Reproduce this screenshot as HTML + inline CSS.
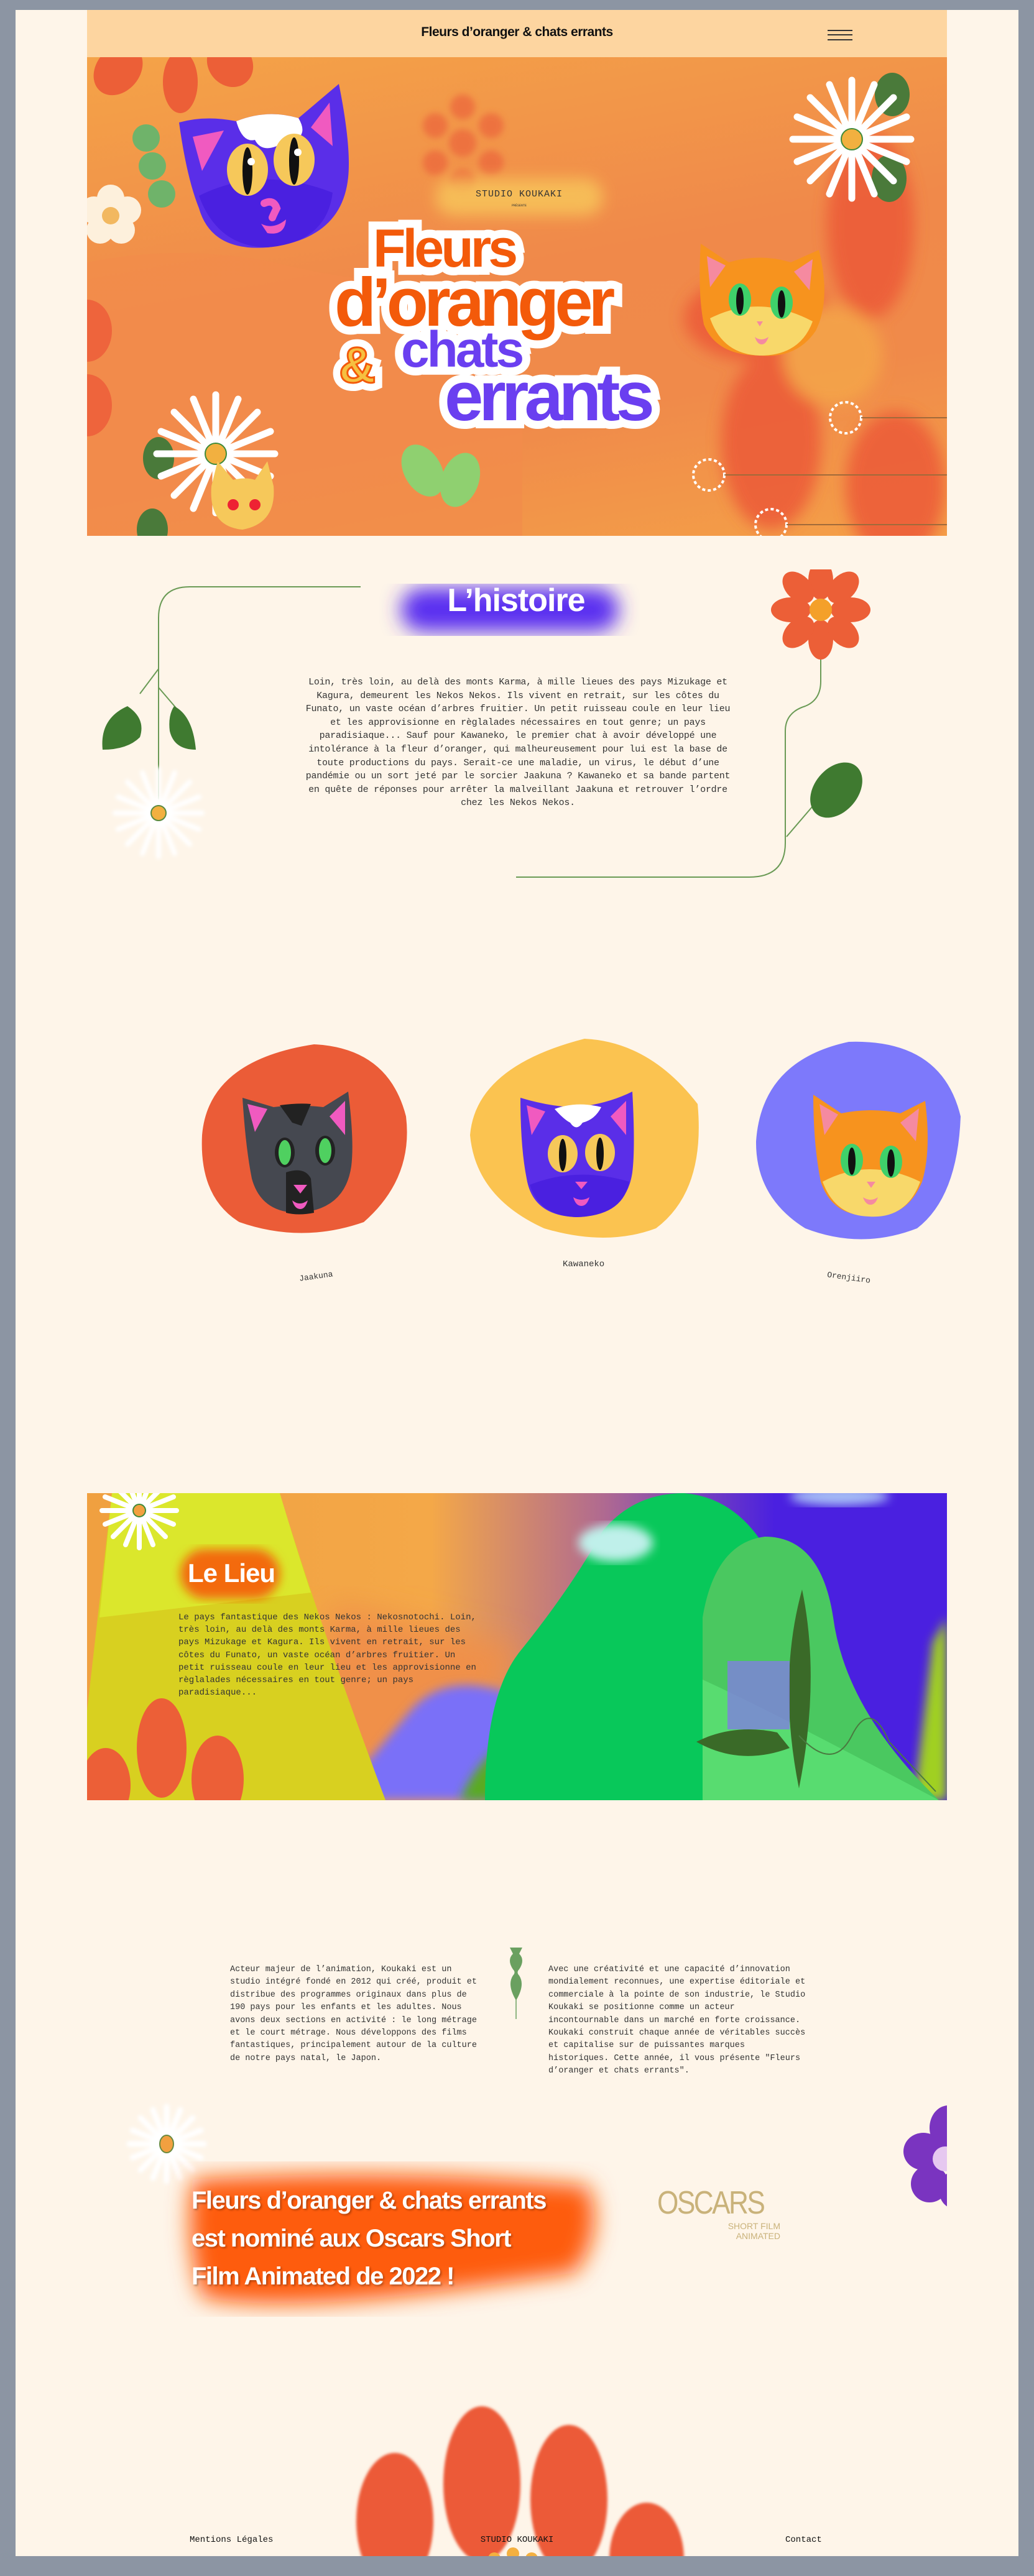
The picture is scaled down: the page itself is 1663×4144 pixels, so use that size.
<!DOCTYPE html>
<html><head><meta charset="utf-8">
<style>
*{margin:0;padding:0;box-sizing:border-box}
body{width:1663px;height:4144px;background:#8c95a3;position:relative;overflow:hidden;font-family:"Liberation Sans",sans-serif}
.panel{position:absolute;left:25px;top:16px;width:1613px;height:4096px;background:#fef5e9;overflow:hidden}
.abs{position:absolute}
.mono{font-family:"Liberation Mono",monospace;color:#333}
.t{position:absolute;font-weight:bold;line-height:1;white-space:nowrap}
.bg{-webkit-text-stroke:26px #fff;color:#fff}
</style></head><body>
<div class="panel">
<!-- header -->
<div class="abs" style="left:115px;top:0;width:1383px;height:76px;background:#fdd5a0"></div>
<div class="abs" style="left:115px;top:24px;width:1383px;text-align:center;font-weight:bold;font-size:21px;color:#111;letter-spacing:-0.5px">Fleurs d’oranger &amp; chats errants</div>
<div class="abs" style="left:1306px;top:32px;width:40px;height:2px;background:#333"></div>
<div class="abs" style="left:1306px;top:39px;width:40px;height:2px;background:#333"></div>
<div class="abs" style="left:1306px;top:47px;width:40px;height:2px;background:#333"></div>

<!-- hero -->
<div class="abs" style="left:115px;top:76px;width:1383px;height:770px;overflow:hidden;background:linear-gradient(170deg,#f4a348 0%,#f0894a 45%,#f08a4a 70%,#f4a048 100%)">
<svg width="1383" height="770" style="position:absolute;left:0;top:0">
<defs><filter id="b8"><feGaussianBlur stdDeviation="12"/></filter><filter id="b4"><feGaussianBlur stdDeviation="5"/></filter></defs>
<path d="M0 330 Q150 300 300 330 Q500 380 700 360 L700 770 L0 770Z" fill="#f28c4c" opacity=".7"/>
<g filter="url(#b8)" fill="#ec5a38" opacity=".85">
<ellipse cx="1260" cy="270" rx="70" ry="150"/><ellipse cx="1080" cy="420" rx="120" ry="70"/><ellipse cx="1100" cy="620" rx="80" ry="140"/><ellipse cx="1300" cy="690" rx="80" ry="120"/>
<circle cx="1200" cy="480" r="80" fill="#f4a548"/>
</g>
<g filter="url(#b4)" fill="#ec6a3e" opacity=".8"><circle cx="604" cy="138" r="22"/><circle cx="604" cy="80" r="20"/><circle cx="650" cy="110" r="20"/><circle cx="650" cy="170" r="20"/><circle cx="604" cy="200" r="20"/><circle cx="560" cy="170" r="20"/><circle cx="560" cy="110" r="20"/></g>
<ellipse cx="220" cy="240" rx="20" ry="30" fill="#ec6a3e" filter="url(#b4)"/>
<ellipse cx="0" cy="440" rx="40" ry="50" fill="#ec5a38" opacity=".8"/><ellipse cx="0" cy="560" rx="40" ry="50" fill="#ec5a38" opacity=".8"/>
<g fill="#ec5f37"><ellipse cx="50" cy="20" rx="35" ry="45" transform="rotate(40 50 20)"/><ellipse cx="150" cy="40" rx="28" ry="50"/><ellipse cx="230" cy="10" rx="35" ry="40" transform="rotate(-40 230 10)"/></g>
<g fill="#6fb36a"><circle cx="95" cy="130" r="22"/><circle cx="105" cy="175" r="22"/><circle cx="120" cy="220" r="22"/></g>
<g transform="translate(38 255)"><g fill="#fdf0dc"><circle cx="0" cy="-28" r="22"/><circle cx="27" cy="-9" r="22"/><circle cx="17" cy="23" r="22"/><circle cx="-17" cy="23" r="22"/><circle cx="-27" cy="-9" r="22"/></g><circle r="14" fill="#f2b860"/></g>
<ellipse cx="1295" cy="60" rx="28" ry="35" fill="#4a7a3a"/><ellipse cx="1290" cy="195" rx="28" ry="38" fill="#4a7a3a"/>
<g transform="translate(1230 132)"><g stroke="#fff" stroke-width="11" stroke-linecap="round"><path d="M0-95V95M-95 0H95M-67-67L67 67M67-67L-67 67M-36-88L36 88M36-88L-36 88M-88-36L88 36M88-36L-88 36"/></g><circle r="17" fill="#f2b040" stroke="#3f8a3a" stroke-width="2"/></g>
<ellipse cx="115" cy="645" rx="25" ry="34" fill="#4a7a3a"/><ellipse cx="105" cy="760" rx="25" ry="34" fill="#4a7a3a"/>
<g transform="translate(207 638)"><g stroke="#fff" stroke-width="11" stroke-linecap="round"><path d="M0-95V95M-95 0H95M-67-67L67 67M67-67L-67 67M-36-88L36 88M36-88L-36 88M-88-36L88 36M88-36L-88 36"/></g><circle r="17" fill="#f2b040" stroke="#3f8a3a" stroke-width="2"/></g>
<ellipse cx="540" cy="665" rx="30" ry="45" fill="#8fd070" transform="rotate(-30 540 665)"/><ellipse cx="600" cy="680" rx="30" ry="45" fill="#8fd070" transform="rotate(20 600 680)"/>
<g fill="none" stroke="#fff" stroke-width="4" stroke-dasharray="5 4"><circle cx="1220" cy="580" r="25"/><circle cx="1000" cy="672" r="25"/><circle cx="1100" cy="752" r="25"/></g>
<path d="M1245 580H1383M1025 672H1383M1125 752H1383" stroke="#a06a3a" stroke-width="2"/>
<g transform="translate(230 710)"><path d="M-30-20L-20-60L5-30Q25-35 40-30L60-60L70-20Q75 40 20 50Q-35 45-30-20Z" fill="#f6c85a"/><circle cx="5" cy="10" r="9" fill="#e23"/><circle cx="40" cy="10" r="9" fill="#e23"/></g>
</svg>
<svg class="abs" style="left:140px;top:43px" width="300" height="265" viewBox="0 0 300 265">
<path d="M8 62Q50 50 100 60Q150 40 200 55L265 0Q285 100 280 150Q270 250 150 263Q60 270 40 200Q20 150 8 62Z" fill="#5a2ee8"/>
<path d="M100 60Q150 40 200 55Q215 80 195 90Q175 85 165 100Q140 110 130 90Q110 95 100 60Z" fill="#fff"/>
<path d="M30 85L80 75L45 140Z" fill="#f05ac0"/><path d="M250 30L255 100L220 70Z" fill="#f05ac0"/>
<path d="M40 180Q140 130 255 175Q245 255 150 263Q70 262 40 180Z" fill="#4a20e0"/>
<ellipse cx="118" cy="138" rx="33" ry="42" fill="#f6c85a"/><ellipse cx="193" cy="122" rx="33" ry="42" fill="#f6c85a"/>
<ellipse cx="118" cy="140" rx="8" ry="38" fill="#111"/><ellipse cx="193" cy="124" rx="8" ry="38" fill="#111"/>
<circle cx="124" cy="125" r="6" fill="#fff"/><circle cx="199" cy="110" r="6" fill="#fff"/>
<path d="M145 192Q160 185 165 200Q160 210 158 215" stroke="#f05ac0" stroke-width="12" fill="none" stroke-linecap="round"/>
<path d="M140 225Q160 235 180 218Q178 245 150 240Z" fill="#f05ac0"/>
</svg>
<svg class="abs" style="left:982px;top:300px" width="210" height="185" viewBox="0 0 210 185">
<path d="M5 0L50 30Q100 15 150 30L195 10Q215 90 190 140Q160 185 100 180Q30 180 10 130Q0 80 5 0Z" fill="#f7931e"/>
<path d="M15 20L45 35L20 70Z" fill="#f58aa0"/><path d="M185 25L180 75L155 45Z" fill="#f58aa0"/>
<path d="M20 120Q100 80 185 125Q165 180 100 180Q40 178 20 120Z" fill="#f8d86a"/>
<ellipse cx="68" cy="90" rx="18" ry="26" fill="#3fd06a"/><ellipse cx="135" cy="95" rx="18" ry="26" fill="#3fd06a"/>
<ellipse cx="68" cy="92" rx="6" ry="22" fill="#111"/><ellipse cx="135" cy="97" rx="6" ry="22" fill="#111"/>
<path d="M95 125l10 0-5 8z" fill="#f58aa0"/><path d="M92 150q10 8 22 0q-4 12-11 12q-7 0-11-12z" fill="#f58aa0"/>
</svg>
<div class="abs" style="left:560px;top:195px;width:270px;height:60px;border-radius:30px;background:#f7c45a;filter:blur(12px);opacity:.85"></div>
<div class="abs mono" style="left:500px;top:212px;width:390px;text-align:center;font-size:15px;color:#333;letter-spacing:1px">STUDIO KOUKAKI</div>
<div class="abs mono" style="left:500px;top:236px;width:390px;text-align:center;font-size:5px;color:#333">PRÉSENTE</div>
<!-- title: white backdrop layer -->
<div class="t bg" style="left:460px;top:265px;font-size:86px;letter-spacing:-5px">Fleurs</div>
<div class="t bg" style="left:398px;top:340px;font-size:110px;letter-spacing:-7px">d’oranger</div>
<div class="t bg" style="left:405px;top:455px;font-size:82px">&amp;</div>
<div class="t bg" style="left:505px;top:430px;font-size:82px;letter-spacing:-4px">chats</div>
<div class="t bg" style="left:575px;top:490px;font-size:112px;letter-spacing:-7px">errants</div>
<div class="t" style="left:460px;top:265px;font-size:86px;letter-spacing:-5px;color:#f35a0a">Fleurs</div>
<div class="t" style="left:398px;top:340px;font-size:110px;letter-spacing:-7px;color:#f35a0a">d’oranger</div>
<div class="t" style="left:405px;top:455px;font-size:82px;color:#f6c040;-webkit-text-stroke:3px #f35a0a">&amp;</div>
<div class="t" style="left:505px;top:430px;font-size:82px;letter-spacing:-4px;color:#6a3ff0">chats</div>
<div class="t" style="left:575px;top:490px;font-size:112px;letter-spacing:-7px;color:#6a3ff0">errants</div>
</div>

<!-- L'histoire -->
<svg class="abs" style="left:0;top:900px" width="1613" height="500">
<defs><filter id="bh"><feGaussianBlur stdDeviation="16"/></filter><filter id="bw"><feGaussianBlur stdDeviation="3"/></filter></defs>
<path d="M555 28H280Q230 28 230 78V370" stroke="#6a9a55" stroke-width="2" fill="none"/>
<path d="M230 160L200 200M230 190L260 225" stroke="#6a9a55" stroke-width="2"/>
<path d="M180 220Q210 240 200 270Q180 290 140 290Q135 240 180 220Z" fill="#3f7a30"/>
<path d="M255 220Q285 235 290 290Q255 290 248 260Q245 235 255 220Z" fill="#3f7a30"/>
<g transform="translate(230 392)" filter="url(#bw)"><g stroke="#fff" stroke-width="8" stroke-linecap="round"><path d="M0-70V70M-70 0H70M-50-50L50 50M50-50L-50 50M-26-65L26 65M26-65L-26 65M-65-26L65 26M65-26L-65 26"/></g></g>
<circle cx="230" cy="392" r="12" fill="#f2b040" stroke="#5a8a40" stroke-width="2"/>
<path d="M1295 100V180Q1295 210 1270 220Q1238 230 1238 260V440Q1238 495 1180 495H805" stroke="#6a9a55" stroke-width="2" fill="none"/>
<path d="M1240 430L1300 360" stroke="#6a9a55" stroke-width="2"/>
<ellipse cx="1320" cy="355" rx="35" ry="50" fill="#3f7a30" transform="rotate(40 1320 355)"/>
<g transform="translate(1295 65)" fill="#ec5f37"><ellipse cx="0" cy="-48" rx="20" ry="32"/><ellipse cx="0" cy="48" rx="20" ry="32"/><ellipse cx="-48" cy="0" rx="32" ry="20"/><ellipse cx="48" cy="0" rx="32" ry="20"/><ellipse cx="-36" cy="-36" rx="20" ry="30" transform="rotate(-45 -36 -36)"/><ellipse cx="36" cy="-36" rx="20" ry="30" transform="rotate(45 36 -36)"/><ellipse cx="-36" cy="36" rx="20" ry="30" transform="rotate(45 -36 36)"/><ellipse cx="36" cy="36" rx="20" ry="30" transform="rotate(-45 36 36)"/><circle r="18" fill="#f4a02a"/></g>
<rect x="620" y="30" width="350" height="70" rx="35" fill="#5a2ef0" filter="url(#bh)"/>
</svg>
<div class="abs" style="left:520px;top:920px;width:570px;text-align:center;font-size:52px;font-weight:bold;color:#fff;letter-spacing:-1px">L’histoire</div>
<div class="abs mono" style="left:460px;top:1071px;width:696px;text-align:center;font-size:15px;letter-spacing:-0.25px;line-height:21.6px">Loin, très loin, au delà des monts Karma, à mille lieues des pays Mizukage et Kagura, demeurent les Nekos Nekos. Ils vivent en retrait, sur les côtes du Funato, un vaste océan d’arbres fruitier. Un petit ruisseau coule en leur lieu et les approvisionne en règlalades nécessaires en tout genre; un pays paradisiaque... Sauf pour Kawaneko, le premier chat à avoir développé une intolérance à la fleur d’oranger, qui malheureusement pour lui est la base de toute productions du pays. Serait-ce une maladie, un virus, le début d’une pandémie ou un sort jeté par le sorcier Jaakuna ? Kawaneko et sa bande partent en quête de réponses pour arrêter la malveillant Jaakuna et retrouver l’ordre chez les Nekos Nekos.</div>

<!-- cats -->
<svg class="abs" style="left:0;top:1640px" width="1613" height="360">
<path d="M480 24Q600 30 628 140Q640 240 560 310Q460 345 360 310Q295 270 300 170Q310 50 480 24Z" fill="#eb5c37"/>
<path d="M915 15Q1020 20 1097 120Q1110 260 1030 320Q950 350 850 320Q740 270 731 170Q740 60 915 15Z" fill="#fbc350"/>
<path d="M1340 20Q1490 15 1520 140Q1515 270 1450 320Q1360 355 1270 320Q1190 270 1191 180Q1200 50 1340 20Z" fill="#7d79fb"/>
<g transform="translate(365 110)"><path d="M0 0L50 15Q90 10 130 15L170-10Q180 70 175 110Q165 180 90 185Q30 185 15 130Q5 80 0 0Z" fill="#454850"/><path d="M60 12Q90 8 110 10L95 45L80 40Z" fill="#222"/><path d="M8 10L40 18L20 55Z" fill="#f05ac0"/><path d="M165 5L165 60L140 30Z" fill="#f05ac0"/><path d="M70 120Q100 110 110 130L115 185Q90 190 70 185Z" fill="#222"/><ellipse cx="68" cy="88" rx="16" ry="24" fill="#222"/><ellipse cx="68" cy="88" rx="10" ry="20" fill="#4fd060"/><ellipse cx="133" cy="85" rx="16" ry="24" fill="#222"/><ellipse cx="133" cy="85" rx="10" ry="20" fill="#4fd060"/><path d="M82 140h22l-11 14z" fill="#f05ac0"/><path d="M80 165q12 10 25 0q-4 14-12 14q-9 0-13-14z" fill="#f05ac0"/></g>
<g transform="translate(812 110)"><path d="M0 0Q50 15 90 15Q140 10 180-10Q185 80 180 120Q170 190 90 192Q20 190 10 130Q0 80 0 0Z" fill="#5a2ee8"/><path d="M55 18Q90 5 130 15Q120 35 100 40Q90 55 80 40Q70 35 55 18Z" fill="#fff"/><path d="M10 12L40 22L18 60Z" fill="#f05ac0"/><path d="M170 5L170 60L145 30Z" fill="#f05ac0"/><path d="M15 140Q90 110 175 135Q165 190 90 192Q30 190 15 140Z" fill="#4a20e0"/><ellipse cx="68" cy="90" rx="24" ry="30" fill="#f6c85a"/><ellipse cx="128" cy="88" rx="24" ry="30" fill="#f6c85a"/><ellipse cx="68" cy="92" rx="6" ry="26" fill="#111"/><ellipse cx="128" cy="90" rx="6" ry="26" fill="#111"/><path d="M88 135h20l-10 12z" fill="#f05ac0"/><path d="M85 160q13 8 26 0q-4 14-13 14q-9 0-13-14z" fill="#f05ac0"/></g>
<g transform="translate(1283 105)"><path d="M0 0L45 30Q95 20 140 30L180 10Q190 90 175 140Q150 200 90 195Q30 195 12 140Q0 80 0 0Z" fill="#f7931e"/><path d="M10 15L40 32L18 65Z" fill="#f58aa0"/><path d="M170 22L165 75L140 45Z" fill="#f58aa0"/><path d="M15 140Q90 100 172 140Q150 200 90 196Q35 195 15 140Z" fill="#f8d86a"/><ellipse cx="62" cy="105" rx="18" ry="26" fill="#3fd06a"/><ellipse cx="125" cy="108" rx="18" ry="26" fill="#3fd06a"/><ellipse cx="62" cy="107" rx="6" ry="22" fill="#111"/><ellipse cx="125" cy="110" rx="6" ry="22" fill="#111"/><path d="M86 140h14l-7 10z" fill="#f58aa0"/><path d="M80 165q12 8 24 0q-4 12-12 12q-8 0-12-12z" fill="#f58aa0"/></g>
</svg>
<div class="abs mono" style="left:456px;top:2030px;font-size:13px;transform:rotate(-8deg)">Jaakuna</div>
<div class="abs mono" style="left:880px;top:2010px;font-size:14px">Kawaneko</div>
<div class="abs mono" style="left:1305px;top:2032px;font-size:13px;transform:rotate(8deg)">Orenjiiro</div>

<!-- le lieu -->
<div class="abs" style="left:115px;top:2386px;width:1383px;height:494px;overflow:hidden;background:linear-gradient(90deg,#f0a040 0%,#f4a848 40%,#b06a90 60%,#4a20e0 80%,#4a20e0 100%)">
<svg width="1383" height="494" style="position:absolute;left:0;top:0">
<defs><filter id="bl"><feGaussianBlur stdDeviation="25"/></filter><filter id="bs"><feGaussianBlur stdDeviation="8"/></filter></defs>
<path d="M400 180L700 250L560 494H300Z" fill="#f0904a" filter="url(#bl)"/>
<path d="M520 350Q580 280 700 330L700 494H400Z" fill="#7a70f8" filter="url(#bs)"/>
<path d="M600 494Q640 400 720 380L720 494Z" fill="#5aaa20" filter="url(#bs)"/>
<path d="M0 350L40 0H310Q370 200 480 494H0Z" fill="#d8d020"/>
<path d="M40 0H310Q340 100 360 160L20 200Z" fill="#dcec30" opacity=".8"/>
<path d="M1360 240Q1383 200 1383 200V494H1330Z" fill="#a0d020" filter="url(#bs)"/>
<path d="M640 494Q640 320 700 250Q780 150 830 60Q880 0 960 0Q1080 10 1130 180V494Z" fill="#08c85a"/>
<path d="M990 494V200Q1010 80 1090 70Q1180 70 1200 200Q1220 350 1370 494Z" fill="#4ac860"/>
<path d="M990 494V300Q1100 350 1370 494Z" fill="#58dc70"/>
<path d="M1150 155Q1180 300 1145 475Q1110 300 1150 155Z" fill="#3a6a28"/>
<path d="M980 400Q1040 370 1110 385L1130 410Q1050 440 980 400Z" fill="#3a6a28"/>
<path d="M1145 390Q1200 450 1230 390Q1260 330 1290 400L1365 480" stroke="#4a7a40" stroke-width="2" fill="none"/>
<rect x="1030" y="270" width="100" height="110" fill="#7f7fe0" opacity=".8"/>
<ellipse cx="850" cy="80" rx="60" ry="30" fill="#bff0ea" filter="url(#bs)"/>
<ellipse cx="1210" cy="5" rx="80" ry="15" fill="#cff" filter="url(#bs)" opacity=".7"/>
<g fill="#ec5f37"><ellipse cx="30" cy="470" rx="40" ry="60"/><ellipse cx="120" cy="410" rx="40" ry="80"/><ellipse cx="210" cy="460" rx="42" ry="70"/></g>
<g transform="translate(84 28)"><g stroke="#fff" stroke-width="8" stroke-linecap="round"><path d="M0-60V60M-60 0H60M-42-42L42 42M42-42L-42 42M-22-55L22 55M22-55L-22 55M-55-22L55 22M55-22L-55 22"/></g><circle r="10" fill="#f2a040" stroke="#3f8a3a" stroke-width="2"/></g>
<rect x="150" y="90" width="160" height="80" rx="40" fill="#f36a0a" filter="url(#bs)"/>
</svg>
<div class="abs" style="left:162px;top:105px;font-size:42px;font-weight:bold;color:#fff;letter-spacing:-1px">Le Lieu</div>
<div class="abs mono" style="left:147px;top:190px;width:495px;font-size:14px;line-height:20.2px">Le pays fantastique des Nekos Nekos : Nekosnotochi. Loin, très loin, au delà des monts Karma, à mille lieues des pays Mizukage et Kagura. Ils vivent en retrait, sur les côtes du Funato, un vaste océan d’arbres fruitier. Un petit ruisseau coule en leur lieu et les approvisionne en règlalades nécessaires en tout genre; un pays paradisiaque...</div>
</div>

<!-- about -->
<div class="abs mono" style="left:345px;top:3143px;width:405px;font-size:13.5px;line-height:20.4px">Acteur majeur de l’animation, Koukaki est un studio intégré fondé en 2012 qui créé, produit et distribue des programmes originaux dans plus de 190 pays pour les enfants et les adultes. Nous avons deux sections en activité : le long métrage et le court métrage. Nous développons des films fantastiques, principalement autour de la culture de notre pays natal, le Japon.</div>
<svg class="abs" style="left:790px;top:3117px" width="30" height="120"><path d="M5 0H25L20 10Q30 20 20 35Q15 40 20 45Q30 60 15 85Q0 60 10 45Q15 40 10 35Q0 20 10 10Z" fill="#6aa060"/><path d="M15 80V115" stroke="#6aa060" stroke-width="1.5"/></svg>
<div class="abs mono" style="left:857px;top:3143px;width:415px;font-size:13.5px;line-height:20.4px">Avec une créativité et une capacité d’innovation mondialement reconnues, une expertise éditoriale et commerciale à la pointe de son industrie, le Studio Koukaki se positionne comme un acteur incontournable dans un marché en forte croissance. Koukaki construit chaque année de véritables succès et capitalise sur de puissantes marques historiques. Cette année, il vous présente "Fleurs d’oranger et chats errants".</div>

<!-- oscars -->
<svg class="abs" style="left:0;top:3340px" width="1613" height="800">
<defs><filter id="bo"><feGaussianBlur stdDeviation="18"/></filter><filter id="bd"><feGaussianBlur stdDeviation="3"/></filter><filter id="bf"><feGaussianBlur stdDeviation="2"/></filter></defs>
<g transform="translate(243 93)" filter="url(#bd)"><g stroke="#fff" stroke-width="9" stroke-linecap="round"><path d="M0-60V60M-60 0H60M-42-42L42 42M42-42L-42 42M-22-55L22 55M22-55L-22 55M-55-22L55 22M55-22L-55 22"/></g></g>
<ellipse cx="243" cy="93" rx="11" ry="14" fill="#f2a040" stroke="#6a8a40" stroke-width="2"/>
<path d="M285 150Q600 130 920 160Q950 230 900 300Q700 330 600 340Q400 360 300 340Q270 250 285 150Z" fill="#fe5c08" filter="url(#bo)"/>
<g transform="translate(1510 117)" fill="#7a34c0"><ellipse cx="-10" cy="-50" rx="30" ry="36"/><ellipse cx="-50" cy="-12" rx="32" ry="30"/><ellipse cx="-40" cy="40" rx="30" ry="30"/><ellipse cx="0" cy="50" rx="25" ry="30"/><ellipse cx="15" cy="0" rx="25" ry="40"/><circle cx="-15" cy="0" r="20" fill="#e6c8f0"/></g>
<rect x="1498" y="0" width="115" height="300" fill="#fef5e9"/>
<g fill="#ec5a38" filter="url(#bf)"><ellipse cx="610" cy="700" rx="62" ry="110"/><ellipse cx="750" cy="640" rx="62" ry="125"/><ellipse cx="890" cy="665" rx="62" ry="120"/><ellipse cx="1015" cy="760" rx="60" ry="90"/></g>
<g fill="#f4b040"><circle cx="770" cy="760" r="10"/><circle cx="800" cy="752" r="10"/><circle cx="830" cy="760" r="10"/></g>
</svg>
<div class="abs" style="left:283px;top:3494px;font-size:40px;font-weight:bold;color:#fff;line-height:61px;letter-spacing:-1.5px;text-shadow:2px 2px 3px rgba(0,0,0,.3)">Fleurs d’oranger &amp; chats errants<br>est nominé aux Oscars Short<br>Film Animated de 2022 !</div>
<div class="abs" style="left:1032px;top:3498px;font-size:52px;color:#c9b27a;letter-spacing:-3px;transform:scaleX(.85);transform-origin:left">OSCARS</div>
<div class="abs" style="left:1090px;top:3557px;font-size:14px;color:#c9b27a;text-align:right;line-height:16px;width:140px">SHORT FILM<br>ANIMATED</div>

<!-- footer -->
<div class="abs mono" style="left:280px;top:4062px;font-size:14px;color:#111">Mentions Légales</div>
<div class="abs mono" style="left:0;width:1613px;top:4062px;text-align:center;font-size:14px;color:#111">STUDIO KOUKAKI</div>
<div class="abs mono" style="left:1238px;top:4062px;font-size:14px;color:#111">Contact</div>
</div>
</body></html>
